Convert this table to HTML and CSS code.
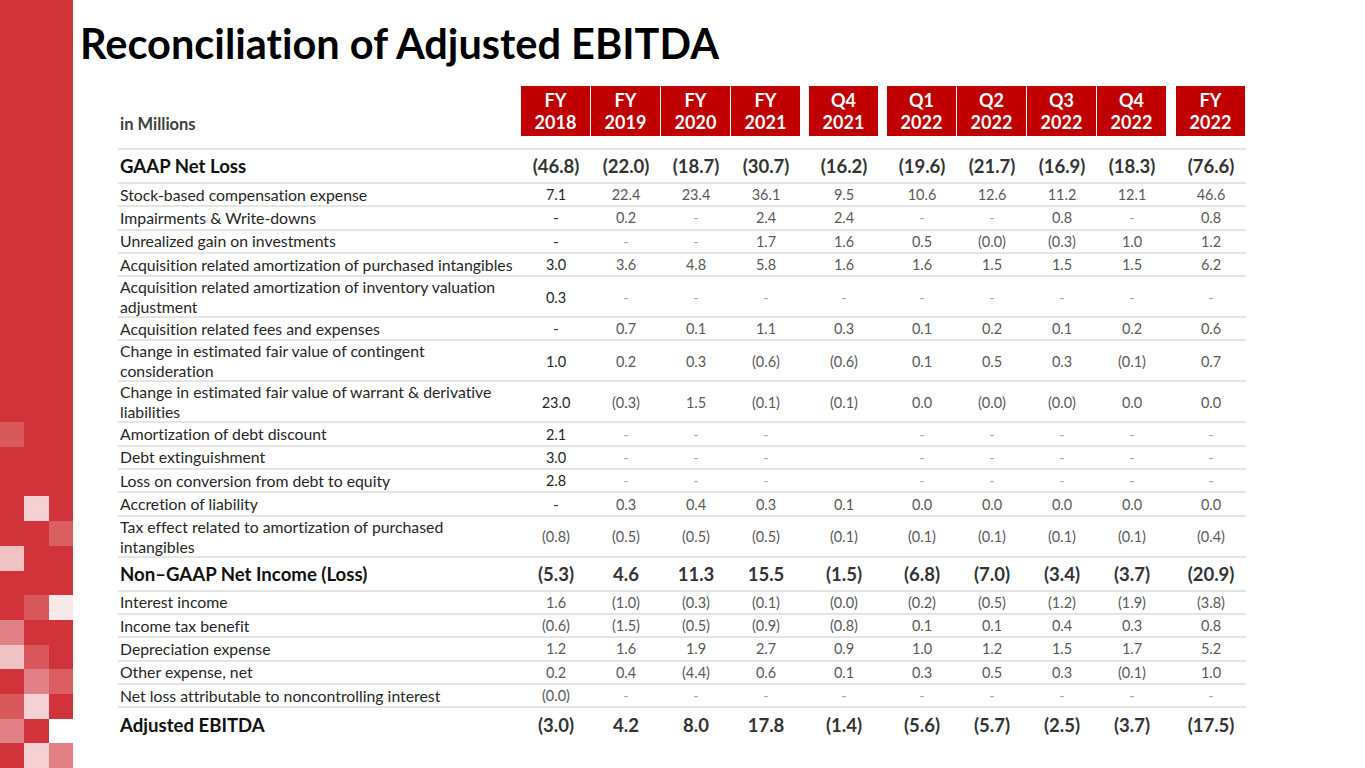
FILE: index.html
```html
<!DOCTYPE html>
<html>
<head>
<meta charset="utf-8">
<link rel="stylesheet" href="styles.css">
</head>
<body>
<div class="page">
  <div class="side">
    <div class="tiles">
      <i class="t m"></i><i></i><i></i>
      <i></i><i></i><i></i>
      <i></i><i></i><i></i>
      <i></i><i class="t vl"></i><i></i>
      <i></i><i></i><i class="t m2"></i>
      <i class="t l"></i><i></i><i></i>
      <i></i><i></i><i></i>
      <i></i><i class="t m"></i><i class="t xl"></i>
      <i class="t s"></i><i></i><i></i>
      <i class="t l"></i><i class="t m"></i><i></i>
      <i></i><i class="t s"></i><i class="t m2"></i>
      <i class="t m"></i><i class="t vl"></i><i></i>
      <i class="t s"></i><i></i><i class="t w"></i>
      <i></i><i class="t vl"></i><i class="t s"></i>
    </div>
  </div>
  <div class="main">
    <h1 class="title">Reconciliation of Adjusted EBITDA</h1>
    <div class="table">
      <div class="row hrow">
        <div class="lab unit">in Millions</div>
        <div class="hc">FY<br>2018</div><div class="hc">FY<br>2019</div><div class="hc">FY<br>2020</div><div class="hc">FY<br>2021</div>
        <div class="gap"></div>
        <div class="hc">Q4<br>2021</div>
        <div class="gap"></div>
        <div class="hc">Q1<br>2022</div><div class="hc">Q2<br>2022</div><div class="hc">Q3<br>2022</div><div class="hc">Q4<br>2022</div>
        <div class="gap"></div>
        <div class="hc">FY<br>2022</div>
      </div>

      <div class="row big">
        <div class="lab">GAAP Net Loss</div>
        <div class="v">(46.8)</div><div class="v">(22.0)</div><div class="v">(18.7)</div><div class="v">(30.7)</div><div class="gap"></div><div class="v">(16.2)</div><div class="gap"></div><div class="v">(19.6)</div><div class="v">(21.7)</div><div class="v">(16.9)</div><div class="v">(18.3)</div><div class="gap"></div><div class="v">(76.6)</div>
      </div>
      <div class="row one dk">
        <div class="lab">Stock-based compensation expense</div>
        <div class="v">7.1</div><div class="v">22.4</div><div class="v">23.4</div><div class="v">36.1</div><div class="gap"></div><div class="v">9.5</div><div class="gap"></div><div class="v">10.6</div><div class="v">12.6</div><div class="v">11.2</div><div class="v">12.1</div><div class="gap"></div><div class="v">46.6</div>
      </div>
      <div class="row one dk">
        <div class="lab">Impairments &amp; Write-downs</div>
        <div class="v d">-</div><div class="v">0.2</div><div class="v d">-</div><div class="v">2.4</div><div class="gap"></div><div class="v">2.4</div><div class="gap"></div><div class="v d">-</div><div class="v d">-</div><div class="v">0.8</div><div class="v d">-</div><div class="gap"></div><div class="v">0.8</div>
      </div>
      <div class="row one dk">
        <div class="lab">Unrealized gain on investments</div>
        <div class="v d">-</div><div class="v d">-</div><div class="v d">-</div><div class="v">1.7</div><div class="gap"></div><div class="v">1.6</div><div class="gap"></div><div class="v">0.5</div><div class="v">(0.0)</div><div class="v">(0.3)</div><div class="v">1.0</div><div class="gap"></div><div class="v">1.2</div>
      </div>
      <div class="row one dk">
        <div class="lab">Acquisition related amortization of purchased intangibles</div>
        <div class="v">3.0</div><div class="v">3.6</div><div class="v">4.8</div><div class="v">5.8</div><div class="gap"></div><div class="v">1.6</div><div class="gap"></div><div class="v">1.6</div><div class="v">1.5</div><div class="v">1.5</div><div class="v">1.5</div><div class="gap"></div><div class="v">6.2</div>
      </div>
      <div class="row two dk">
        <div class="lab">Acquisition related amortization of inventory valuation<br>adjustment</div>
        <div class="v">0.3</div><div class="v d">-</div><div class="v d">-</div><div class="v d">-</div><div class="gap"></div><div class="v d">-</div><div class="gap"></div><div class="v d">-</div><div class="v d">-</div><div class="v d">-</div><div class="v d">-</div><div class="gap"></div><div class="v d">-</div>
      </div>
      <div class="row one dk">
        <div class="lab">Acquisition related fees and expenses</div>
        <div class="v d">-</div><div class="v">0.7</div><div class="v">0.1</div><div class="v">1.1</div><div class="gap"></div><div class="v">0.3</div><div class="gap"></div><div class="v">0.1</div><div class="v">0.2</div><div class="v">0.1</div><div class="v">0.2</div><div class="gap"></div><div class="v">0.6</div>
      </div>
      <div class="row two dk">
        <div class="lab">Change in estimated fair value of contingent<br>consideration</div>
        <div class="v">1.0</div><div class="v">0.2</div><div class="v">0.3</div><div class="v">(0.6)</div><div class="gap"></div><div class="v">(0.6)</div><div class="gap"></div><div class="v">0.1</div><div class="v">0.5</div><div class="v">0.3</div><div class="v">(0.1)</div><div class="gap"></div><div class="v">0.7</div>
      </div>
      <div class="row two dk">
        <div class="lab">Change in estimated fair value of warrant &amp; derivative<br>liabilities</div>
        <div class="v">23.0</div><div class="v">(0.3)</div><div class="v">1.5</div><div class="v">(0.1)</div><div class="gap"></div><div class="v">(0.1)</div><div class="gap"></div><div class="v">0.0</div><div class="v">(0.0)</div><div class="v">(0.0)</div><div class="v">0.0</div><div class="gap"></div><div class="v">0.0</div>
      </div>
      <div class="row one dk">
        <div class="lab">Amortization of debt discount</div>
        <div class="v">2.1</div><div class="v d">-</div><div class="v d">-</div><div class="v d">-</div><div class="gap"></div><div class="v"></div><div class="gap"></div><div class="v d">-</div><div class="v d">-</div><div class="v d">-</div><div class="v d">-</div><div class="gap"></div><div class="v d">-</div>
      </div>
      <div class="row one dk">
        <div class="lab">Debt extinguishment</div>
        <div class="v">3.0</div><div class="v d">-</div><div class="v d">-</div><div class="v d">-</div><div class="gap"></div><div class="v"></div><div class="gap"></div><div class="v d">-</div><div class="v d">-</div><div class="v d">-</div><div class="v d">-</div><div class="gap"></div><div class="v d">-</div>
      </div>
      <div class="row one dk">
        <div class="lab">Loss on conversion from debt to equity</div>
        <div class="v">2.8</div><div class="v d">-</div><div class="v d">-</div><div class="v d">-</div><div class="gap"></div><div class="v"></div><div class="gap"></div><div class="v d">-</div><div class="v d">-</div><div class="v d">-</div><div class="v d">-</div><div class="gap"></div><div class="v d">-</div>
      </div>
      <div class="row one dk">
        <div class="lab">Accretion of liability</div>
        <div class="v d">-</div><div class="v">0.3</div><div class="v">0.4</div><div class="v">0.3</div><div class="gap"></div><div class="v">0.1</div><div class="gap"></div><div class="v">0.0</div><div class="v">0.0</div><div class="v">0.0</div><div class="v">0.0</div><div class="gap"></div><div class="v">0.0</div>
      </div>
      <div class="row two">
        <div class="lab">Tax effect related to amortization of purchased<br>intangibles</div>
        <div class="v">(0.8)</div><div class="v">(0.5)</div><div class="v">(0.5)</div><div class="v">(0.5)</div><div class="gap"></div><div class="v">(0.1)</div><div class="gap"></div><div class="v">(0.1)</div><div class="v">(0.1)</div><div class="v">(0.1)</div><div class="v">(0.1)</div><div class="gap"></div><div class="v">(0.4)</div>
      </div>
      <div class="row big">
        <div class="lab">Non–GAAP Net Income (Loss)</div>
        <div class="v">(5.3)</div><div class="v">4.6</div><div class="v">11.3</div><div class="v">15.5</div><div class="gap"></div><div class="v">(1.5)</div><div class="gap"></div><div class="v">(6.8)</div><div class="v">(7.0)</div><div class="v">(3.4)</div><div class="v">(3.7)</div><div class="gap"></div><div class="v">(20.9)</div>
      </div>
      <div class="row one">
        <div class="lab">Interest income</div>
        <div class="v">1.6</div><div class="v">(1.0)</div><div class="v">(0.3)</div><div class="v">(0.1)</div><div class="gap"></div><div class="v">(0.0)</div><div class="gap"></div><div class="v">(0.2)</div><div class="v">(0.5)</div><div class="v">(1.2)</div><div class="v">(1.9)</div><div class="gap"></div><div class="v">(3.8)</div>
      </div>
      <div class="row one">
        <div class="lab">Income tax benefit</div>
        <div class="v">(0.6)</div><div class="v">(1.5)</div><div class="v">(0.5)</div><div class="v">(0.9)</div><div class="gap"></div><div class="v">(0.8)</div><div class="gap"></div><div class="v">0.1</div><div class="v">0.1</div><div class="v">0.4</div><div class="v">0.3</div><div class="gap"></div><div class="v">0.8</div>
      </div>
      <div class="row one">
        <div class="lab">Depreciation expense</div>
        <div class="v">1.2</div><div class="v">1.6</div><div class="v">1.9</div><div class="v">2.7</div><div class="gap"></div><div class="v">0.9</div><div class="gap"></div><div class="v">1.0</div><div class="v">1.2</div><div class="v">1.5</div><div class="v">1.7</div><div class="gap"></div><div class="v">5.2</div>
      </div>
      <div class="row one">
        <div class="lab">Other expense, net</div>
        <div class="v">0.2</div><div class="v">0.4</div><div class="v">(4.4)</div><div class="v">0.6</div><div class="gap"></div><div class="v">0.1</div><div class="gap"></div><div class="v">0.3</div><div class="v">0.5</div><div class="v">0.3</div><div class="v">(0.1)</div><div class="gap"></div><div class="v">1.0</div>
      </div>
      <div class="row one">
        <div class="lab">Net loss attributable to noncontrolling interest</div>
        <div class="v">(0.0)</div><div class="v d">-</div><div class="v d">-</div><div class="v d">-</div><div class="gap"></div><div class="v d">-</div><div class="gap"></div><div class="v d">-</div><div class="v d">-</div><div class="v d">-</div><div class="v d">-</div><div class="gap"></div><div class="v d">-</div>
      </div>
      <div class="row big last">
        <div class="lab">Adjusted EBITDA</div>
        <div class="v">(3.0)</div><div class="v">4.2</div><div class="v">8.0</div><div class="v">17.8</div><div class="gap"></div><div class="v">(1.4)</div><div class="gap"></div><div class="v">(5.6)</div><div class="v">(5.7)</div><div class="v">(2.5)</div><div class="v">(3.7)</div><div class="gap"></div><div class="v">(17.5)</div>
      </div>
    </div>
  </div>
</div>
</body>
</html>
```
FILE: styles.css
```css
html, body {
  margin: 0;
  padding: 0;
  background: #ffffff;
}
body {
  font-family: Lato, "Open Sans", "Liberation Sans", sans-serif;
  color: #262626;
  font-variant-ligatures: none;
  font-feature-settings: "liga" 0, "clig" 0;
}
.page {
  display: flex;
  width: 1365px;
  height: 768px;
  overflow: hidden;
}
.side {
  width: 73px;
  flex: none;
  background: #d0343a;
  display: flex;
  flex-direction: column;
  justify-content: flex-end;
}
.tiles {
  display: grid;
  grid-template-columns: repeat(3, 1fr);
  grid-template-rows: repeat(14, 24.7px);
}
.tiles i { display: block; }
.t.m { background: #d9585c; }
.t.m2 { background: #db5e62; }
.t.vl { background: #f3d0d1; }
.t.l { background: #efc2c3; }
.t.xl { background: #f8e8e8; }
.t.s { background: #e28185; }
.t.w { background: #ffffff; }

.main {
  flex: 1;
  padding-left: 7px;
}
.title {
  margin: 19px 0 0;
  font-size: 41.5px;
  line-height: 48px;
  font-weight: 700;
  color: #000;
}
.table {
  margin: 19px 0 0 38px;
  width: 1128px;
}
.row {
  display: grid;
  grid-template-columns: 403px 70px 70px 70px 70px 8px 70px 8px 70px 70px 70px 70px 9px 70px;
  align-items: center;
  border-bottom: 2px solid #e5e5e5;
  box-sizing: border-box;
}
.lab {
  padding-left: 2px;
  font-size: 15.8px;
  line-height: 20px;
  color: #262626;
  white-space: nowrap;
}
.v {
  text-align: center;
  font-size: 14.5px;
  color: #595959;
}
.v.d { color: #a6a6a6; }
.dk .v:nth-child(2) { color: #262626; }
.one { height: 23.3px; }
.two { height: 41px; }
.big { height: 34px; }
.big .lab {
  font-size: 18.6px;
  font-weight: 700;
  color: #111;
}
.big .v {
  font-size: 18.5px;
  font-weight: 700;
  color: #333;
}
.last { border-bottom: none; }

.hrow {
  align-items: end;
  padding-bottom: 12px;
}
.unit {
  font-size: 16.5px;
  font-weight: 700;
  color: #404040;
  line-height: 20px;
  padding-bottom: 2px;
}
.hc {
  background: #c00000;
  color: #fff;
  font-weight: 700;
  font-size: 18px;
  line-height: 22px;
  text-align: center;
  height: 50px;
  box-sizing: border-box;
  padding-top: 3px;
  margin-right: 1px;
}
```
